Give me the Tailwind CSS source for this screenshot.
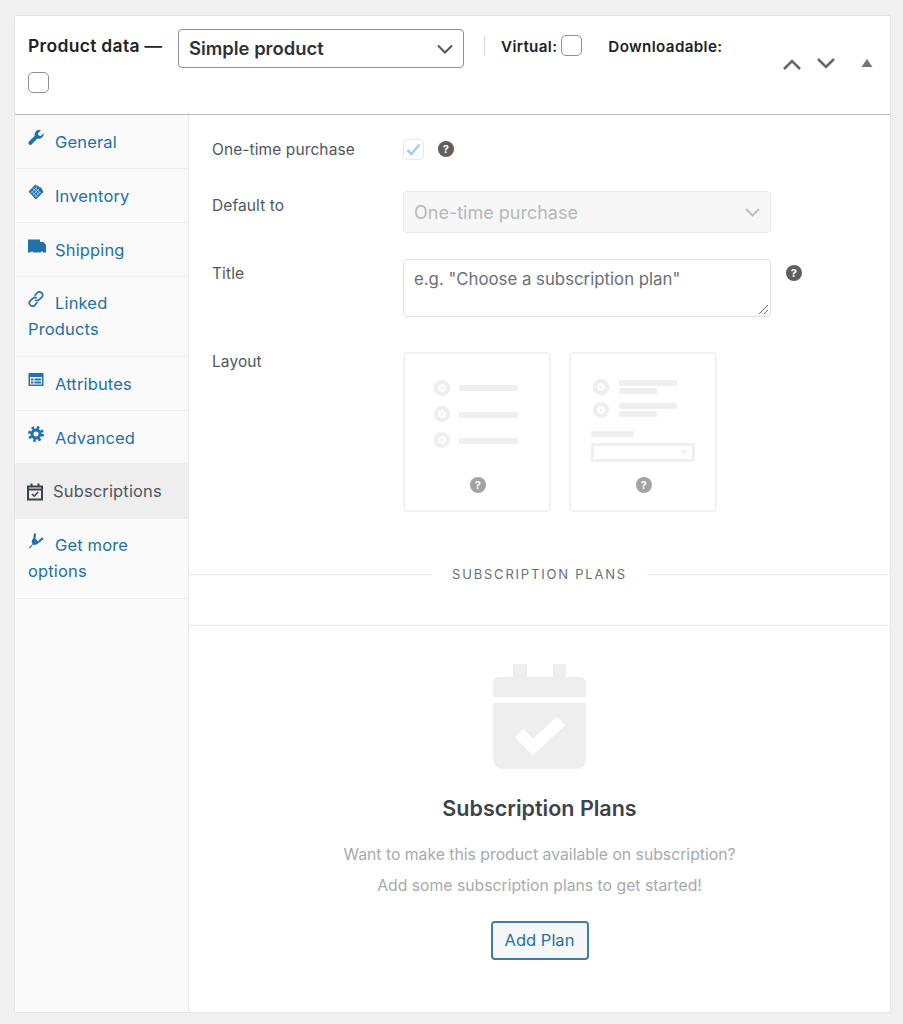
<!DOCTYPE html>
<html lang="en">
<head>
  <meta charset="utf-8" />
  <title>Product data</title>
  <script src="https://cdn.jsdelivr.net/npm/@tailwindcss/browser@4"></script>
</head>
<body class="bg-[#f0f0f1] [font-family:Inter,sans-serif] text-[#3c434a] overflow-hidden">
  <div class="h-[1024px] pt-[15px] pl-[14px] pr-[12px]">
    <div class="relative h-[998px] bg-white border border-[#e2e4e7] flex flex-col rounded-[2px]">

      <!-- header -->
      <div class="h-[99px] border-b border-[#b5b7ba] pl-[13px] pt-[13px] shrink-0">
        <div class="flex items-start">
          <span class="text-[17.5px] leading-[34px] font-semibold text-[#1d2327] tracking-[0.3px] w-[150px] whitespace-nowrap">Product data —</span>
          <div class="w-[286px] h-[39px] border border-[#8c8f94] rounded-[4px] flex items-center justify-between pl-[10px] pr-[10px]">
            <span class="text-[18.4px] font-semibold text-[#2c3338]">Simple product</span>
            <svg class="w-[16px] h-[10px]" viewBox="0 0 16 10" fill="none" stroke="#50575e" stroke-width="2"><path d="M1 1.500l7 7 7-7"/></svg>
          </div>
          <div class="w-px h-[20px] bg-[#dcdcde] ml-[20px] mt-[7px]"></div>
          <span class="ml-[16px] text-[15.2px] leading-[36px] font-semibold text-[#1d2327] tracking-[0.35px]">Virtual:</span>
          <span class="ml-[4px] mt-[6px] w-[21px] h-[21px] border border-[#8c8f94] rounded-[5px] bg-white"></span>
          <span class="ml-[26px] text-[15.2px] leading-[36px] font-semibold text-[#1d2327] tracking-[0.35px]">Downloadable:</span>
        </div>
        <div class="mt-[4px] w-[21px] h-[21px] border border-[#8c8f94] rounded-[5px]"></div>
      </div>

      <!-- handle actions -->
      <div class="absolute top-[41px] left-[767px] flex items-center">
        <svg class="w-[20px] h-[14px]" viewBox="0 0 20 14" fill="none" stroke="#646970" stroke-width="2.600"><path d="M2 12l8-8 8 8"/></svg>
        <svg class="w-[20px] h-[14px] ml-[14px]" viewBox="0 0 20 14" fill="none" stroke="#646970" stroke-width="2.600"><path d="M2 2l8 8 8-8"/></svg>
        <svg class="w-[12px] h-[10px] ml-[25px] -mt-[3px]" viewBox="0 0 12 10" fill="#72777c"><path d="M6 1l5.500 8H.5z"/></svg>
      </div>

      <div class="flex flex-1 min-h-0">
        <!-- tabs -->
        <ul class="w-[174px] shrink-0 bg-[#fafafa] border-r border-[#e8e8e8] text-[16.5px] leading-[26px] tracking-[0.15px] text-[#2271a8] h-full">
          <li class="h-[54px] border-b border-[#eee] pl-[13px] pr-[20px] pt-[14px]">
            <svg class="inline-block align-[2px] w-[16px] h-[16px] mr-[11px]" viewBox="0 0 16 16" fill="#2271a8"><path d="M15.600 3.200l-2.800 2.800-2.200-.5-.6-2.300L12.800.4c-1.700-.7-3.700-.3-5 1-1.200 1.200-1.500 2.900-1 4.400L1 11.500c-.8.8-.8 2 0 2.800.8.8 2 .8 2.800 0l5.700-5.700c1.500.5 3.300.1 4.500-1 1.300-1.300 2-3 1.600-4.400z"/></svg>General
          </li>
          <li class="h-[54px] border-b border-[#eee] pl-[13px] pr-[20px] pt-[14px]">
            <svg class="inline-block align-[2px] w-[16px] h-[16px] mr-[11px]" viewBox="0 0 16 16" fill="#2271a8"><path d="M.5 7.500L7.500.5l1.500 1.500 1-.5 1 1.500 2 .5 2.500 4.500L8 15.500z"/><path d="M5 4.500l6 6M3.500 7l6 6M7 3.500l6 6" stroke="#fff" stroke-width=".7"/><path d="M3 9l6-6M5 11l6-6M7 13l5-5" stroke="#fff" stroke-width=".5"/></svg>Inventory
          </li>
          <li class="h-[54px] border-b border-[#eee] pl-[13px] pr-[20px] pt-[14px]">
            <svg class="inline-block align-[2px] w-[18px] h-[15px] mr-[9px]" viewBox="0 0 18 15" fill="#2271a8"><path d="M0 .5h12v2.500h3.500l2.500 3v7.500H0z"/><circle cx="4" cy="13.500" r="1.100" fill="#fff"/><circle cx="14" cy="13.500" r="1.100" fill="#fff"/></svg>Shipping
          </li>
          <li class="h-[80px] border-b border-[#eee] pl-[13px] pr-[20px] pt-[13px]">
            <svg class="inline-block align-[2px] w-[16px] h-[16px] mr-[11px]" viewBox="0 0 17 17" fill="none" stroke="#2271a8" stroke-width="1.800"><path d="M7 5l3-3.200c1.200-1.100 3-1.100 4.200 0l.5.500c1.100 1.200 1.100 3 0 4.200L11.500 9.500c-1.200 1.100-2.800 1-3.800-.2"/><path d="M10 12l-3 3.200c-1.200 1.100-3 1.100-4.200 0l-.5-.5c-1.100-1.200-1.100-3 0-4.200l3.200-3c1.200-1.100 2.800-1 3.800.2"/></svg>Linked Products
          </li>
          <li class="h-[54px] border-b border-[#eee] pl-[13px] pr-[20px] pt-[14px]">
            <svg class="inline-block align-[2px] w-[16px] h-[16px] mr-[11px]" viewBox="0 0 16 16" fill="#2271a8"><path fill-rule="evenodd" d="M.5 1h15v13H.5zM2 5v7.500h12V5z"/><path d="M3 6.500h2.500v2H3zM3 9.500h2.500v2H3zM6.500 6.500H13v2H6.500zM6.500 9.500H13v2H6.500z"/></svg>Attributes
          </li>
          <li class="h-[53px] border-b border-[#eee] pl-[13px] pr-[20px] pt-[14px]">
            <svg class="inline-block align-[2px] w-[16px] h-[16px] mr-[11px]" viewBox="0 0 16 16" fill="none" stroke="#2271a8"><circle cx="8" cy="8" r="6.500" stroke-width="3" stroke-dasharray="2.550 2.550"/><circle cx="8" cy="8" r="4" stroke-width="3"/></svg>Advanced
          </li>
          <li class="h-[55px] border-b border-[#eee] bg-[#eeeeee] text-[#50575e] pl-[12px] pt-[14px] flex items-start">
            <svg class="mt-[5px] w-[16px] h-[18px] mr-[10px] shrink-0" viewBox="0 0 16 18" fill="none" stroke="#3c434a"><path d="M1 3.500h14v13H1z" stroke-width="2"/><path d="M1 6.500h14" stroke-width="2"/><path d="M4.500 0.500v3M11.500 0.500v3" stroke-width="2"/><path d="M5 11l2.200 2.200 4-4.200" stroke-width="1.500"/></svg><span>Subscriptions</span>
          </li>
          <li class="h-[80px] border-b border-[#eee] pl-[13px] pr-[20px] pt-[13px]">
            <svg class="inline-block align-[2px] w-[16px] h-[16px] mr-[11px]" viewBox="0 0 16 16" fill="#2271a8"><path d="M1 14.500L4.500 11C3 8.500 4 6 6.500 4.500L11 9.500C9.500 11.500 7 12.500 5 11.500L2 15.500z"/><path d="M6.500 5L7 .5M10.500 9L15 5" fill="none" stroke="#2271a8" stroke-width="2.200"/></svg>Get more options
          </li>
        </ul>

        <!-- panel -->
        <div class="flex-1 min-w-0 text-[15.5px] tracking-[0.1px] text-[#50575e]">
          <div class="pl-[23px]">
            <div class="flex items-center h-[68px]">
              <span class="w-[191px] mt-[1px]">One-time purchase</span>
              <span class="w-[21px] h-[21px] border border-[#e8e9ea] rounded-[4px] flex items-center justify-center">
                <svg class="w-[15px] h-[13px]" viewBox="0 0 15 13" fill="none" stroke="#a6cfe6" stroke-width="2.500"><path d="M1.500 7l4 4 8-9.500"/></svg>
              </span>
              <span class="ml-[14px] w-[16px] h-[16px] rounded-full bg-[#5f5f5f] text-white text-[11px] leading-[16px] font-bold text-center">?</span>
            </div>
            <div class="flex items-start h-[68px] mt-[8px]">
              <span class="w-[191px] mt-[3px] leading-[24px]">Default to</span>
              <div class="w-[368px] h-[42px] bg-[#f7f7f7] border border-[#e8e8e8] rounded-[4px] flex items-center justify-between pl-[10px] pr-[10px]">
                <span class="text-[18px] tracking-normal text-[#b4b8bc]">One-time purchase</span>
                <svg class="w-[15px] h-[9px]" viewBox="0 0 15 9" fill="none" stroke="#b9bcc0" stroke-width="1.800"><path d="M1 1l6.500 6.500L14 1"/></svg>
              </div>
            </div>
            <div class="flex items-start">
              <span class="w-[191px] mt-[3px] leading-[24px]">Title</span>
              <div class="relative w-[368px] h-[58px] border border-[#dcdde0] rounded-[4px] pl-[10px] pt-[6px] text-[16.800px] tracking-normal leading-[26px] text-[#6b7075]">
                e.g. "Choose a subscription plan"
                <svg class="absolute right-[1px] bottom-[1px] w-[11px] h-[11px]" viewBox="0 0 11 11" fill="none" stroke="#6b7075" stroke-width="1"><path d="M1 10l9-9M6 10l4-4"/></svg>
              </div>
              <span class="ml-[15px] mt-[6px] w-[16px] h-[16px] rounded-full bg-[#5f5f5f] text-white text-[11px] leading-[16px] font-bold text-center">?</span>
            </div>
            <div class="flex items-start mt-[35px]">
              <span class="w-[191px] -mt-[2px] leading-[24px]">Layout</span>
              <div class="flex gap-[18px]">
                <div class="relative w-[148px] h-[160px] border-2 border-[#f1f1f1] rounded-[4px]">
                  <svg class="w-[145px] h-[120px] -ml-px" viewBox="0 0 145 120" fill="#efefef">
                    <circle cx="38" cy="34" r="6" fill="none" stroke="#efefef" stroke-width="4.500"/><circle cx="38" cy="34" r="1.500"/>
                    <circle cx="38" cy="60" r="6" fill="none" stroke="#efefef" stroke-width="4.500"/><circle cx="38" cy="60" r="1.500"/>
                    <circle cx="38" cy="86" r="6" fill="none" stroke="#efefef" stroke-width="4.500"/><circle cx="38" cy="86" r="1.500"/>
                    <rect x="55" y="31" width="59" height="6"/><rect x="55" y="58" width="59" height="6"/><rect x="55" y="84" width="59" height="6"/>
                  </svg>
                  <span class="absolute left-[65px] top-[123px] w-[16px] h-[16px] rounded-full bg-[#a3a3a3] text-white text-[11px] leading-[16px] font-bold text-center">?</span>
                </div>
                <div class="relative w-[148px] h-[160px] border-2 border-[#f1f1f1] rounded-[4px]">
                  <svg class="w-[145px] h-[120px] -ml-px" viewBox="0 0 145 120" fill="#efefef">
                    <circle cx="31" cy="33" r="6" fill="none" stroke="#efefef" stroke-width="4.500"/><circle cx="31" cy="33" r="1.500"/>
                    <circle cx="31" cy="56" r="6" fill="none" stroke="#efefef" stroke-width="4.500"/><circle cx="31" cy="56" r="1.500"/>
                    <rect x="49" y="26" width="58" height="6"/><rect x="49" y="34" width="38" height="6"/>
                    <rect x="49" y="49" width="58" height="6"/><rect x="49" y="57" width="38" height="6"/>
                    <rect x="21" y="77" width="43" height="6"/>
                    <rect x="22.500" y="90.500" width="101" height="16" fill="none" stroke="#efefef" stroke-width="3"/>
                    <path d="M110 96h9l-4.500 5z"/>
                  </svg>
                  <span class="absolute left-[65px] top-[123px] w-[16px] h-[16px] rounded-full bg-[#a3a3a3] text-white text-[11px] leading-[16px] font-bold text-center">?</span>
                </div>
              </div>
            </div>
          </div>

          <!-- plans divider -->
          <div class="flex items-center mt-[53px] text-[13px] leading-[18px] tracking-[1.800px] text-[#6b7075]">
            <div class="flex-1 h-px bg-[#e8e8e8]"></div>
            <span class="px-[20px]">SUBSCRIPTION PLANS</span>
            <div class="flex-1 h-px bg-[#e8e8e8]"></div>
          </div>
          <div class="h-px bg-[#e8e8e8] mt-[42px]"></div>

          <!-- empty state -->
          <div class="flex flex-col items-center pt-[38px]">
            <svg class="w-[93px] h-[105px]" viewBox="0 0 93 105" fill="#eeeeee">
              <rect x="20" y="0" width="14" height="15"/><rect x="60" y="0" width="13" height="15"/>
              <path d="M6 13h81a6 6 0 0 1 6 6v14H0V19a6 6 0 0 1 6-6z"/>
              <path d="M0 39h93v56a10 10 0 0 1-10 10H10A10 10 0 0 1 0 95z"/>
              <path d="M26 69l14 14 28-26" fill="none" stroke="#fff" stroke-width="12"/>
            </svg>
            <h3 class="mt-[24px] text-[21.500px] tracking-normal leading-[30px] font-semibold text-[#3c434a]">Subscription Plans</h3>
            <p class="mt-[20px] text-[15.750px] tracking-normal leading-[24px] text-[#a7aaad]">Want to make this product available on subscription?</p>
            <p class="mt-[7px] text-[15.750px] tracking-normal leading-[24px] text-[#a7aaad]">Add some subscription plans to get started!</p>
            <div class="mt-[23px] w-[98px] h-[39px] border-2 border-[#3f7ea8] rounded-[4px] bg-[#f6f7f7] flex items-center justify-center text-[16.5px] tracking-normal text-[#2271a8]">Add Plan</div>
          </div>
        </div>
      </div>
    </div>
  </div>
</body>
</html>
